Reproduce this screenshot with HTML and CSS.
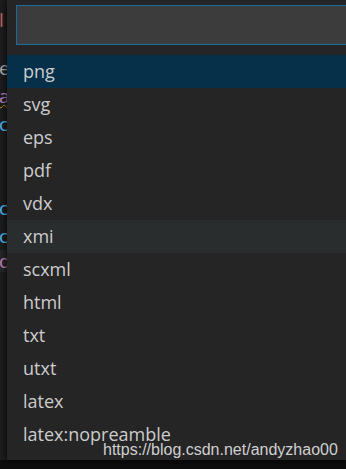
FILE: index.html
```html
<!DOCTYPE html>
<html lang="en">
<head>
<meta charset="UTF-8">
<meta name="viewport" content="width=device-width, initial-scale=1.0">
<title>Export format</title>
<link rel="stylesheet" href="styles.css">
</head>
<body>
  <!-- Editor underneath the quick pick -->
  <div class="editor">
    <div class="line first"><span class="tok-red">l</span></div>
    <div class="gap"></div>
    <div class="line"><span class="tok-plain">e</span></div>
    <div class="line"><span class="tok-purple squiggle">a</span></div>
    <div class="line"><span class="tok-blue">c</span></div>
    <div class="line"></div>
    <div class="line"></div>
    <div class="line"><span class="tok-blue">c</span></div>
    <div class="line"><span class="tok-blue">c</span></div>
    <div class="line current"><span class="tok-purple">d</span></div>
  </div>
  <div class="bottom-bar"></div>

  <!-- Quick pick dropdown -->
  <div class="quick-pick">
    <div class="input-box"></div>
    <ul class="pick-list">
      <li class="pick-item selected">png</li>
      <li class="pick-item">svg</li>
      <li class="pick-item">eps</li>
      <li class="pick-item">pdf</li>
      <li class="pick-item">vdx</li>
      <li class="pick-item hover">xmi</li>
      <li class="pick-item">scxml</li>
      <li class="pick-item">html</li>
      <li class="pick-item">txt</li>
      <li class="pick-item">utxt</li>
      <li class="pick-item">latex</li>
      <li class="pick-item">latex:nopreamble</li>
    </ul>
  </div>

  <div class="watermark">https://blog.csdn.net/andyzhao00</div>
</body>
</html>
```

FILE: styles.css
```css
/* page */
body {
  margin: 0;
  width: 346px;
  height: 469px;
  overflow: hidden;
  position: relative;
  background-color: #1e1e1e;
  font-family: "Open Sans", "Noto Sans", sans-serif;
}

/* editor strip on the left */
.editor {
  height: 460px;
  box-sizing: border-box;
  padding-top: 6px;
  font-size: 19px;
}
.line {
  height: 28px;
  line-height: 28px;
  margin-left: -1px;
}
.gap {
  height: 20px;
}
.line.current {
  height: 22px;
  line-height: 22px;
  background-color: #282828;
}
.tok-red { color: #d16969; }
.tok-plain { color: #b8b8b8; }
.tok-purple { color: #c586c0; }
.tok-blue { color: #4fc1ff; }
.squiggle {
  text-decoration: underline wavy #cca700;
  text-decoration-thickness: 1px;
}
.bottom-bar {
  height: 9px;
  background-color: #0d0d0d;
}

/* quick pick (cut off by the right edge of the shot) */
.quick-pick {
  position: absolute;
  left: 7px;
  top: 0;
  right: 0;
  height: 460px;
  background-color: #252526;
  box-shadow: 0 0 8px #000;
}
.input-box {
  margin: 5px 0 0 9px;
  height: 40px;
  box-sizing: border-box;
  background-color: #3c3c3c;
  border: 1px solid #1a6aa0;
  border-right: none;
}
.pick-list {
  list-style: none;
  margin: 10px 0 0 0;
  padding: 0;
}
.pick-item {
  height: 33px;
  line-height: 33px;
  padding-left: 16px;
  font-size: 18px;
  color: #cccccc;
}
.pick-item.selected {
  background-color: #062f4a;
}
.pick-item.hover {
  background-color: #2a2d2e;
}

/* watermark */
.watermark {
  position: absolute;
  left: 103px;
  top: 440px;
  font-family: "Liberation Sans", Arial, sans-serif;
  font-size: 16px;
  line-height: 19px;
  color: #d0d0d0;
}
```
